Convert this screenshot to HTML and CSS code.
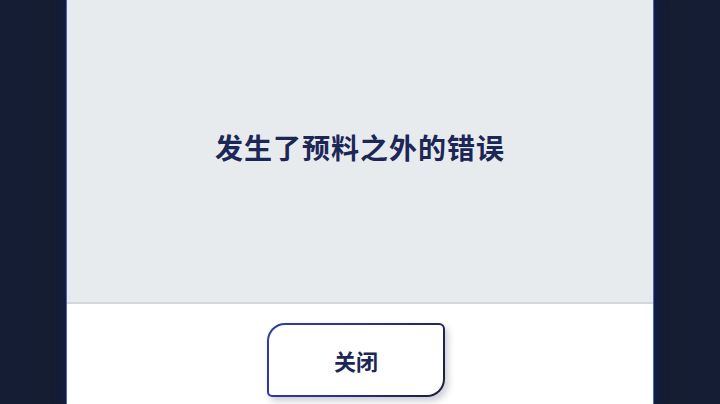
FILE: index.html
```html
<!DOCTYPE html>
<html lang="zh-CN">
<head>
<meta charset="utf-8">
<title>错误</title>
<link rel="stylesheet" href="styles.css">
</head>
<body>
<div class="stage">
  <div class="panel">
    <div class="message">
      <p class="message-text">发生了预料之外的错误</p>
    </div>
    <div class="actions">
      <button class="close-btn" type="button">关闭</button>
    </div>
  </div>
</div>
</body>
</html>
```

FILE: styles.css
```css
* { box-sizing: border-box; }
html, body {
  margin: 0;
  padding: 0;
  width: 720px;
  height: 404px;
  overflow: hidden;
}
body {
  background: linear-gradient(90deg, #141d33 0%, #161b30 50%, #141d33 100%);
  font-family: "Noto Sans CJK SC", "Noto Sans", sans-serif;
}
.stage {
  height: 404px;
  display: flex;
  justify-content: center;
}
.panel {
  width: 586px;
  height: 404px;
  display: flex;
  flex-direction: column;
  background: #ffffff;
  box-shadow: 0 0 0 1px #4a68b0, 0 0 10px 2px #10214f;
}
.message {
  height: 304px;
  background: #e8ebee;
  border-bottom: 2px solid #d3d6da;
  display: flex;
  align-items: center;
  justify-content: center;
  padding-bottom: 8px;
}
.message-text {
  margin: 0;
  font-size: 28px;
  font-weight: 700;
  letter-spacing: 1px;
  color: #1c2757;
}
.actions {
  display: flex;
  justify-content: center;
  padding-top: 19px;
}
.close-btn {
  width: 178px;
  height: 74px;
  margin-left: -8px;
  border: 2px solid transparent;
  border-radius: 18px 6px 18px 5px;
  background:
    linear-gradient(#ffffff, #ffffff) padding-box,
    linear-gradient(120deg, #2c3fa6 0%, #28338a 50%, #1b1c3a 100%) border-box;
  box-shadow: 3px 4px 7px rgba(20, 25, 60, 0.22);
  font-family: "Noto Sans CJK SC", "Noto Sans", sans-serif;
  font-size: 22px;
  font-weight: 700;
  color: #1c2757;
  padding: 0;
}
```
